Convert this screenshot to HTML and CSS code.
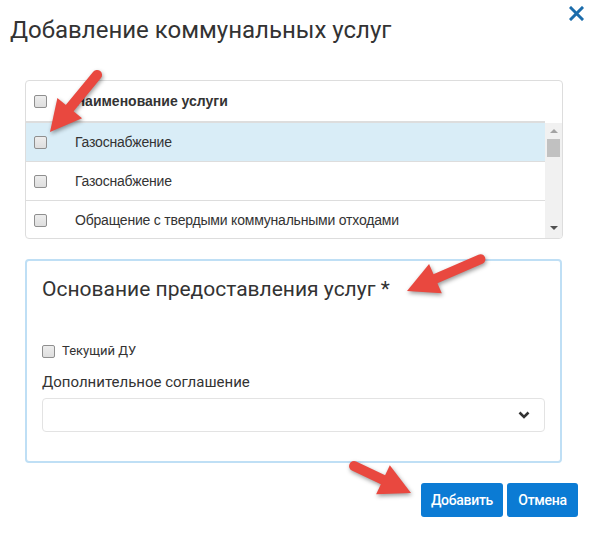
FILE: index.html
```html
<!DOCTYPE html>
<html lang="ru">
<head>
<meta charset="utf-8">
<title>Добавление коммунальных услуг</title>
<link rel="stylesheet" href="styles.css">
</head>
<body>
<div class="modal">
  <div class="modal-header">
    <h1 class="modal-title">Добавление коммунальных услуг</h1>
    <button class="close" type="button">
      <svg width="15" height="15" viewBox="0 0 15 15"><path d="M2 2L13 13M13 2L2 13" stroke="#1b6cab" stroke-width="3" stroke-linecap="square"/></svg>
    </button>
  </div>

  <div class="modal-body">
    <div class="grid">
      <div class="grid-head">
        <div class="grid-head-row">
          <div class="cell-check"><input type="checkbox" class="chk"></div>
          <div class="cell-name">Наименование услуги</div>
        </div>
        <div class="grid-head-gap"></div>
      </div>
      <div class="grid-body">
        <div class="grid-rows">
          <div class="grid-row selected">
            <div class="cell-check"><input type="checkbox" class="chk"></div>
            <div class="cell-name">Газоснабжение</div>
          </div>
          <div class="grid-row">
            <div class="cell-check"><input type="checkbox" class="chk"></div>
            <div class="cell-name">Газоснабжение</div>
          </div>
          <div class="grid-row">
            <div class="cell-check"><input type="checkbox" class="chk"></div>
            <div class="cell-name">Обращение с твердыми коммунальными отходами</div>
          </div>
        </div>
        <div class="scrollbar">
          <span class="sb-up"></span>
          <span class="sb-thumb"></span>
          <span class="sb-down"></span>
        </div>
      </div>
    </div>

    <fieldset class="panel">
      <h2 class="panel-title">Основание предоставления услуг *</h2>
      <label class="check-line"><input type="checkbox" class="chk"> Текущий ДУ</label>
      <div class="field-label">Дополнительное соглашение</div>
      <div class="select">
        <svg width="12" height="8" viewBox="0 0 12 8"><path d="M1.5 1.5L6 6L10.5 1.5" fill="none" stroke="#333" stroke-width="2.6"/></svg>
      </div>
    </fieldset>
  </div>

  <div class="modal-footer">
    <button class="btn" type="button">Добавить</button>
    <button class="btn" type="button">Отмена</button>
  </div>

  <!-- красные стрелки-подсказки поверх формы -->
  <svg class="hints" width="591" height="533" viewBox="0 0 591 533">
    <g fill="#e9483f" stroke="#e9483f">
      <g transform="translate(50 132) rotate(129.5)">
        <line x1="-74" y1="0" x2="-24" y2="0" stroke-width="10" stroke-linecap="round"/>
        <polygon points="0,0 -31,-16 -31,16" stroke="none"/>
      </g>
      <g transform="translate(407 291) rotate(156.6)">
        <line x1="-80" y1="0" x2="-24" y2="0" stroke-width="10" stroke-linecap="round"/>
        <polygon points="0,0 -31,-16 -31,16" stroke="none"/>
      </g>
      <g transform="translate(411 493) rotate(25.3)">
        <line x1="-63" y1="0" x2="-24" y2="0" stroke-width="10" stroke-linecap="round"/>
        <polygon points="0,0 -31,-16 -31,16" stroke="none"/>
      </g>
    </g>
  </svg>
</div>
</body>
</html>
```

FILE: styles.css
```css
body{
  margin: 0;
  background: #fff;
  font-family: Roboto, Arial, sans-serif;
  color: #333;
}
.modal{
  position: relative;
  width: 591px;
  height: 533px;
}
.modal-header{
  display: flex;
  justify-content: space-between;
  align-items: flex-start;
  padding: 6px 7px 0 10px;
}
.modal-title{
  margin: 10px 0 0 0;
  font-size: 24px;
  font-weight: 400;
  line-height: 28px;
  color: #333;
}
.close{
  border: 0;
  background: none;
  padding: 0;
  width: 15px;
  height: 15px;
  cursor: pointer;
}
.close svg{
  display: block;
}

.modal-body{
  padding: 36px 28px 0 25px;
}

/* таблица услуг */
.grid{
  border: 1px solid #ddd;
  border-radius: 4px;
  overflow: hidden;
  font-family: "Liberation Sans", Arial, sans-serif;
  font-size: 14px;
}
.grid-head{
  display: flex;
}
.grid-head-row{
  flex: 1;
  display: flex;
  align-items: center;
  height: 40px;
  border-bottom: 2px solid #ddd;
  font-weight: bold;
}
.grid-head-gap{
  width: 17px;
}
.grid-body{
  display: flex;
  height: 115px;
}
.grid-rows{
  flex: 1;
  overflow: hidden;
}
.grid-row{
  display: flex;
  align-items: center;
  height: 38px;
  border-top: 1px solid #ddd;
  letter-spacing: -0.2px;
}
.grid-row:first-child{
  border-top: 0;
}
.grid-row.selected{
  background: #d9edf7;
}
.cell-check{
  width: 41px;
  padding-left: 8px;
  display: flex;
  align-items: center;
}
.cell-name{
  white-space: nowrap;
}

.scrollbar{
  width: 17px;
  background: #f1f1f1;
  position: relative;
}
.sb-thumb{
  display: block;
  margin: 16px 2px 0 2px;
  height: 18px;
  background: #c1c1c1;
}
.sb-up, .sb-down{
  position: absolute;
  left: 5px;
  width: 0;
  height: 0;
  border-left: 4px solid transparent;
  border-right: 4px solid transparent;
}
.sb-up{
  top: 6px;
  border-bottom: 4px solid #a3a3a3;
}
.sb-down{
  bottom: 8px;
  border-top: 4px solid #505050;
}

.chk{
  appearance: none;
  -webkit-appearance: none;
  margin: 0;
  width: 13px;
  height: 13px;
  border: 1px solid #8f8f8f;
  border-radius: 2px;
  background: linear-gradient(to bottom, #ededed, #dedede);
  box-sizing: border-box;
}

/* основание */
.panel{
  margin: 20px 1px 0 0;
  padding: 15px 15px 29px 15px;
  border: 2px solid #bfdff5;
  border-radius: 4px;
  min-width: 0;
}
.panel-title{
  margin: 0;
  font-size: 21px;
  font-weight: 400;
  line-height: 26px;
  color: #333;
}
.check-line{
  display: flex;
  align-items: center;
  gap: 7px;
  margin-top: 39px;
  font-size: 13px;
  line-height: 20px;
}
.field-label{
  margin-top: 11px;
  font-size: 15px;
  line-height: 20px;
}
.select{
  margin-top: 6px;
  height: 34px;
  border: 1px solid #e3e3e3;
  border-radius: 4px;
  box-sizing: border-box;
  display: flex;
  align-items: center;
  justify-content: flex-end;
  padding-right: 14px;
}
.select svg{
  display: block;
}

.modal-footer{
  display: flex;
  justify-content: flex-end;
  gap: 4px;
  padding: 20px 13px 0 0;
}
.btn{
  height: 34px;
  min-width: 71px;
  padding: 0 10px;
  border: 0;
  border-radius: 3px;
  background: #0b7bd4;
  color: #fff;
  font-family: Roboto, Arial, sans-serif;
  font-size: 14px;
  font-weight: 500;
  letter-spacing: -0.3px;
}

.hints{
  position: absolute;
  left: 0;
  top: 0;
  pointer-events: none;
  filter: drop-shadow(1px 2px 2px rgba(0,0,0,0.4));
}
```
